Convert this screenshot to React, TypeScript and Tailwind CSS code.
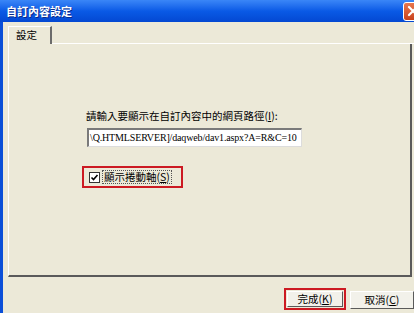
export default function App() {
  const cjk = "font-['Noto_Sans_CJK_TC','Noto_Sans',sans-serif]";

  return (
    <div className="w-[414px] h-[313px] overflow-hidden bg-[#0b4fd8] flex flex-col">
      {/* title bar */}
      <div className="h-[22px] shrink-0 flex items-center justify-between bg-gradient-to-b from-[#3a86f7] via-[#0a5ae6] to-[#0448d2] pl-[6px]">
        <span
          className={`${cjk} text-[11px] font-bold text-white leading-none [text-shadow:1px_1px_0_#0a2a8a]`}
        >
          自訂內容設定
        </span>
        <div className="w-[21px] h-[19px] mr-[-10px] rounded-[3px] border border-white bg-gradient-to-b from-[#e8764d] to-[#c8421d] flex items-center justify-start pl-[3px]">
          <svg width="12" height="12" viewBox="0 0 12 12">
            <path d="M2 2 L10 10 M10 2 L2 10" stroke="white" strokeWidth="2.2" strokeLinecap="round" />
          </svg>
        </div>
      </div>

      {/* dialog body */}
      <div className="flex-1 ml-[3px] bg-[#ece9d8] pl-[5px] pt-[4px] flex flex-col">
        {/* tab strip */}
        <div className="h-[18px] flex items-end shrink-0">
          <div
            className={`${cjk} w-[44px] h-[18px] border-l border-t border-white border-r-2 border-r-[#6b6b6b] pl-[7px] pt-[1px] text-[10.5px] leading-[14px] text-black`}
          >
            設定
          </div>
          <div className="flex-1 border-b border-white" />
        </div>

        {/* tab page */}
        <div className="w-[404px] h-[233px] shrink-0 border-l border-white border-r-2 border-r-[#5a5a5a] border-b-2 border-b-[#5a5a5a] pl-[77px] pt-[66px]">
          <div className={`${cjk} text-[10.5px] leading-[12px] text-black`}>
            請輸入要顯示在自訂內容中的網頁路徑(<span className="underline">I</span>):
          </div>
          <div className="mt-[6px] ml-[1px] w-[215px] h-[19px] bg-white border-l-2 border-t-2 border-[#7a7a7a] border-r border-b border-r-[#dcdcdc] border-b-[#dcdcdc] overflow-hidden whitespace-nowrap pl-[1px] font-['Liberation_Serif',serif] text-[10px] tracking-[-0.15px] leading-[15px] text-black">
            \Q.HTMLSERVER]/daqweb/dav1.aspx?A=R&amp;C=10
          </div>
          <div className="mt-[19px] ml-[-4px] w-[101px] h-[22px] border-2 border-[#cc1a22] flex items-center pl-[5px] gap-[2px]">
            <div className="w-[11px] h-[11px] bg-white border border-[#333] flex items-center justify-center">
              <svg width="9" height="9" viewBox="0 0 9 9">
                <path d="M1.5 4.5 L3.5 6.5 L7.5 2" stroke="black" strokeWidth="1.6" fill="none" />
              </svg>
            </div>
            <span
              className={`${cjk} text-[10.5px] leading-[12px] text-black border border-dotted border-[#555] px-[1px]`}
            >
              顯示捲動軸(<span className="underline">S</span>)
            </span>
          </div>
        </div>

        {/* buttons */}
        <div className="flex items-start pt-[11px] pl-[276px] gap-[4px]">
          <div className="w-[66px] h-[22px] border-2 border-[#cc1a22] p-[1px]">
            <div
              className={`${cjk} w-full h-full bg-[#f2f1ea] border border-[#5a5a5a] border-t-white border-l-white flex items-center justify-center text-[10.5px] text-black`}
            >
              完成(<span className="underline">K</span>)
            </div>
          </div>
          <div
            className={`${cjk} mt-[3px] w-[64px] h-[18px] shrink-0 bg-[#f2f1ea] border border-[#5a5a5a] border-t-white border-l-white flex items-center justify-center text-[10.5px] text-black`}
          >
            取消(<span className="underline">C</span>)
          </div>
        </div>
      </div>
    </div>
  );
}
